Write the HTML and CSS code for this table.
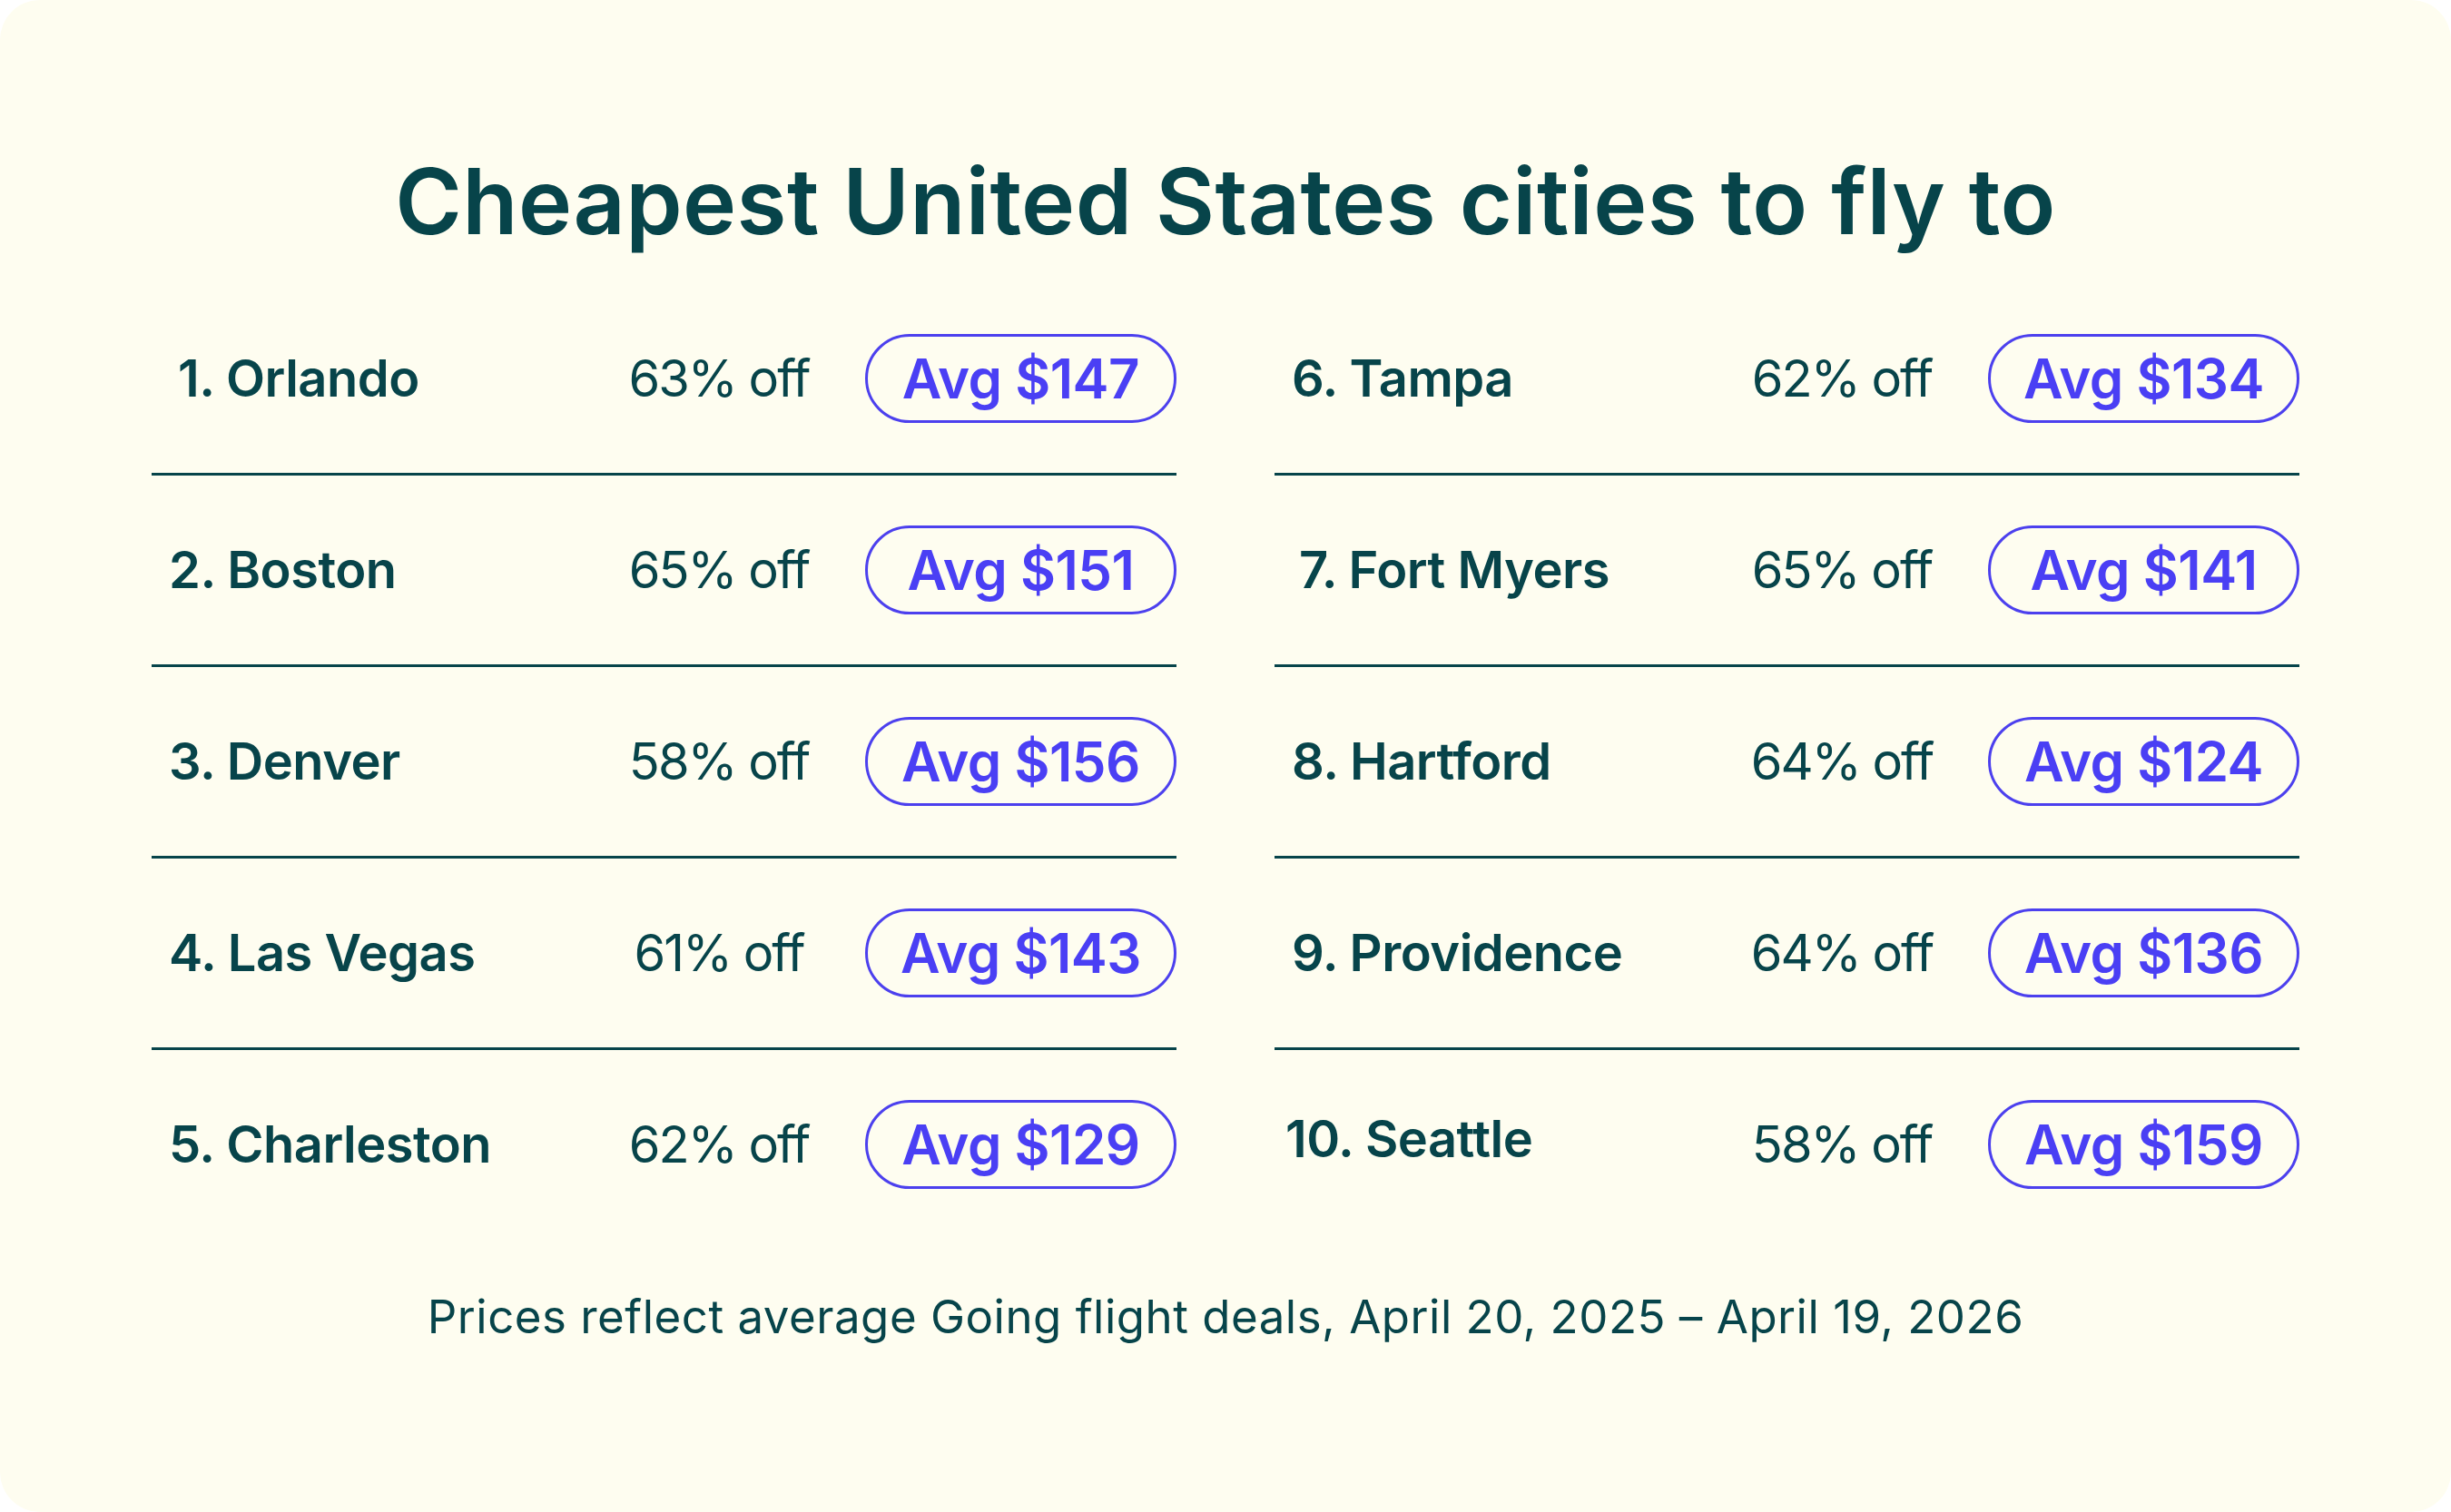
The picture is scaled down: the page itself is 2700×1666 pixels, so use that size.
FILE: index.html
```html
<!DOCTYPE html>
<html lang="en">
<head>
<meta charset="utf-8">
<title>Cheapest United States cities to fly to</title>
<link rel="stylesheet" href="styles.css">
</head>
<body>
<main class="card">
  <h1 class="title">Cheapest United States cities to fly to</h1>
  <section class="lists">
    <ol class="col">
      <li class="row"><span class="name name-indent">1. Orlando</span><span class="pct">63% off</span><span class="pill">Avg $147</span></li>
      <li class="row"><span class="name">2. Boston</span><span class="pct">65% off</span><span class="pill">Avg $151</span></li>
      <li class="row"><span class="name">3. Denver</span><span class="pct">58% off</span><span class="pill">Avg $156</span></li>
      <li class="row"><span class="name">4. Las Vegas</span><span class="pct">61% off</span><span class="pill">Avg $143</span></li>
      <li class="row"><span class="name">5. Charleston</span><span class="pct">62% off</span><span class="pill">Avg $129</span></li>
    </ol>
    <ol class="col">
      <li class="row"><span class="name">6. Tampa</span><span class="pct">62% off</span><span class="pill">Avg $134</span></li>
      <li class="row"><span class="name name-indent-sm">7. Fort Myers</span><span class="pct">65% off</span><span class="pill">Avg $141</span></li>
      <li class="row"><span class="name">8. Hartford</span><span class="pct">64% off</span><span class="pill">Avg $124</span></li>
      <li class="row"><span class="name">9. Providence</span><span class="pct">64% off</span><span class="pill">Avg $136</span></li>
      <li class="row"><span class="name name-raised">10. Seattle</span><span class="pct">58% off</span><span class="pill">Avg $159</span></li>
    </ol>
  </section>
  <p class="note">Prices reflect average Going flight deals, April 20, 2025 – April 19, 2026</p>
</main>
</body>
</html>
```

FILE: styles.css
```css
* { box-sizing: border-box; }

html, body {
  margin: 0;
  padding: 0;
  background: #ffffff;
}

.card {
  width: 2700px;
  height: 1666px;
  background: #fefdf0;
  border-radius: 44px;
  padding: 162px 167px 0 167px;
  font-family: "Inter", "Liberation Sans", sans-serif;
  color: #07444a;
  display: flex;
  flex-direction: column;
  align-items: stretch;
}

.title {
  margin: 0;
  text-align: center;
  font-size: 100px;
  line-height: 120px;
  font-weight: 600;
  letter-spacing: 0.4px;
  color: #07444a;
}

.lists {
  margin-top: 31px;
  display: grid;
  grid-template-columns: 1fr 1fr;
  column-gap: 108px;
}

.col {
  list-style: none;
  margin: 0;
  padding: 0;
}

.row {
  height: 211px;
  display: grid;
  grid-template-columns: 1fr 240px 343px;
  column-gap: 41px;
  align-items: center;
  padding-left: 19px;
  border-bottom: 3px solid #07444a;
}

.row:last-child {
  height: 208px;
  border-bottom: none;
}

.name {
  font-size: 56px;
  font-weight: 600;
  letter-spacing: -0.5px;
  white-space: nowrap;
}

.name-indent {
  padding-left: 10px;
}

.name-indent-sm {
  padding-left: 8px;
}

.name-raised {
  transform: translateY(-6px);
  margin-left: -7px;
}

.pct {
  text-align: center;
  font-size: 56px;
  font-weight: 400;
  letter-spacing: -2px;
  white-space: nowrap;
}

.pill {
  height: 98px;
  border: 3px solid #4c40ee;
  border-radius: 49px;
  display: flex;
  align-items: center;
  justify-content: center;
  font-size: 60px;
  font-weight: 600;
  letter-spacing: -0.5px;
  color: #4a3ff4;
  white-space: nowrap;
}

.note {
  margin: 55px 0 0 0;
  text-align: center;
  font-size: 51px;
  line-height: 62px;
  font-weight: 400;
  letter-spacing: 0.5px;
  color: #07444a;
}
```
